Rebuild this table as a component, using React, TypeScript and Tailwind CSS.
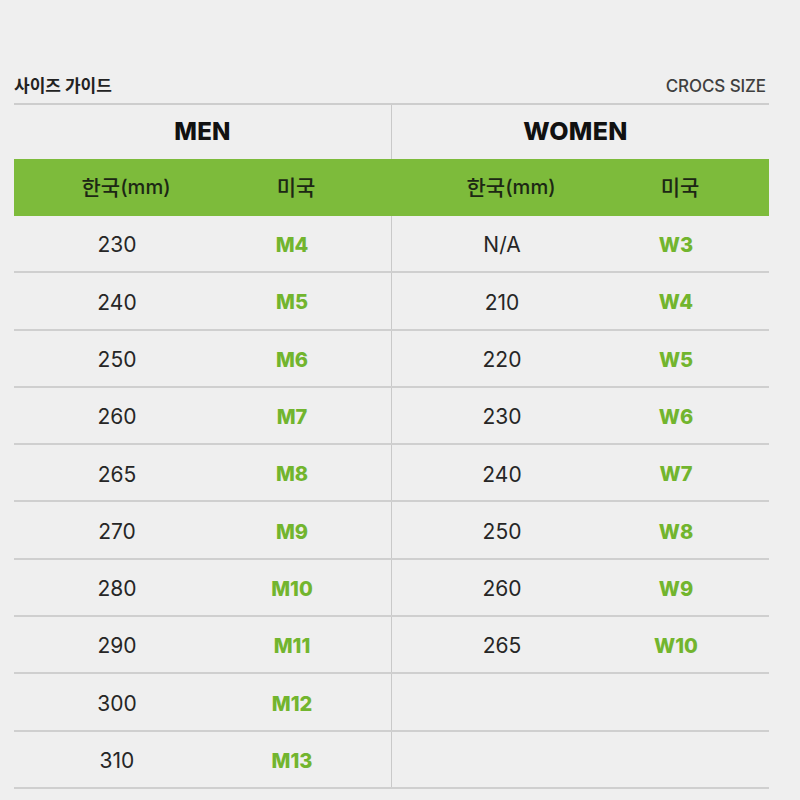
const men = [
  ['230', 'M4'],
  ['240', 'M5'],
  ['250', 'M6'],
  ['260', 'M7'],
  ['265', 'M8'],
  ['270', 'M9'],
  ['280', 'M10'],
  ['290', 'M11'],
  ['300', 'M12'],
  ['310', 'M13'],
]

const women = [
  ['N/A', 'W3'],
  ['210', 'W4'],
  ['220', 'W5'],
  ['230', 'W6'],
  ['240', 'W7'],
  ['250', 'W8'],
  ['260', 'W9'],
  ['265', 'W10'],
]

const font = "font-['Inter','Noto_Sans_CJK_KR',sans-serif]"

export default function App() {
  return (
    <div className={`min-h-[800px] w-[800px] bg-[#efefef] pl-[14px] pr-[31px] ${font}`}>
      {/* title */}
      <div className="flex h-[103px] items-end justify-between pb-[7px]">
        <span className="text-[17px] font-bold leading-5 text-[#222]">사이즈 가이드</span>
        <span className="pr-[3px] text-[17px] font-medium leading-5 tracking-[-0.1px] text-[#3f3f3f]">
          CROCS SIZE
        </span>
      </div>

      <div className="border-t-2 border-[#cdcdcd]">
        {/* gender header */}
        <div className="flex h-[54px]">
          <div className="flex w-[378px] items-center justify-center border-r border-[#c9c9c9] text-[24px] font-extrabold tracking-[0.3px] text-[#111]">
            MEN
          </div>
          <div className="flex flex-1 items-center justify-center pr-[10px] text-[25px] font-extrabold tracking-[0.3px] text-[#111]">
            WOMEN
          </div>
        </div>

        {/* green header */}
        <div className="flex h-[57px] items-center bg-[#7dbb3b] text-[21px] font-medium text-[#1c2714]">
          <div className="flex w-[206px] justify-center pl-[18px]">
            한국<span className="text-[20px]">(mm)</span>
          </div>
          <div className="flex w-[144px] justify-center pl-[8px]">미국</div>
          <div className="w-[28px]" />
          <div className="flex w-[220px] justify-center pl-[18px]">
            한국<span className="text-[20px]">(mm)</span>
          </div>
          <div className="flex w-[128px] justify-center pl-[8px]">미국</div>
        </div>

        {/* rows */}
        {men.map((m, i) => {
          const w = women[i]
          return (
            <div key={i} className="flex h-[57.3px] border-b-2 border-[#cfcfcf]">
              <div className="flex w-[378px] items-center border-r border-[#c9c9c9] pt-[3px]">
                <div className="flex w-[206px] justify-center text-[21px] text-[#262626]">{m[0]}</div>
                <div className="flex w-[144px] justify-center text-[20px] font-extrabold text-[#72b52e]">{m[1]}</div>
              </div>
              <div className="flex flex-1 items-center pt-[3px]">
                {w && (
                  <>
                    <div className="flex w-[220px] justify-center text-[21px] text-[#262626]">{w[0]}</div>
                    <div className="flex w-[128px] justify-center text-[20px] font-extrabold text-[#72b52e]">{w[1]}</div>
                  </>
                )}
              </div>
            </div>
          )
        })}
      </div>
    </div>
  )
}
